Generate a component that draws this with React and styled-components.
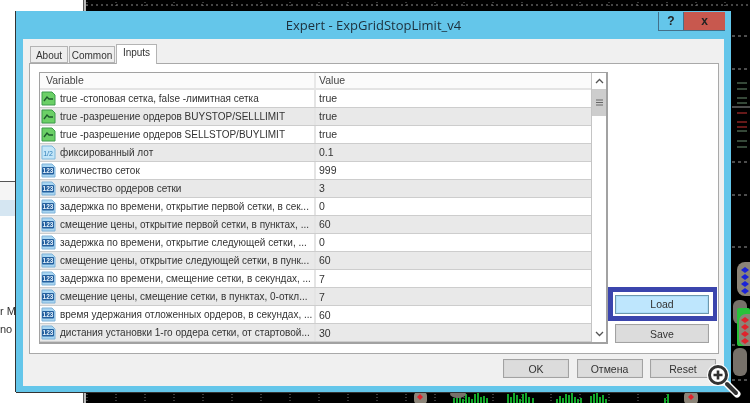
import styled, { createGlobalStyle } from 'styled-components';

const GlobalStyle = createGlobalStyle`
	html, body {
		margin: 0;
		padding: 0;
		background: #000;
	}
	#root {
		width: 750px;
		height: 403px;
		overflow: hidden;
	}
`;

const ROWS = [
	{ type: 'bool', name: 'true -стоповая сетка, false -лимитная сетка', value: 'true' },
	{ type: 'bool', name: 'true -разрешение ордеров BUYSTOP/SELLLIMIT', value: 'true' },
	{ type: 'bool', name: 'true -разрешение ордеров SELLSTOP/BUYLIMIT', value: 'true' },
	{ type: 'frac', name: 'фиксированный лот', value: '0.1' },
	{ type: 'int', name: 'количество сеток', value: '999' },
	{ type: 'int', name: 'количество ордеров сетки', value: '3' },
	{ type: 'int', name: 'задержка по времени, открытие первой сетки, в сек...', value: '0' },
	{ type: 'int', name: 'смещение цены, открытие первой сетки, в пунктах, ...', value: '60' },
	{ type: 'int', name: 'задержка по времени, открытие следующей сетки, ...', value: '0' },
	{ type: 'int', name: 'смещение цены, открытие следующей сетки, в пунк...', value: '60' },
	{ type: 'int', name: 'задержка по времени, смещение сетки, в секундах, ...', value: '7' },
	{ type: 'int', name: 'смещение цены, смещение сетки, в пунктах, 0-откл...', value: '7' },
	{ type: 'int', name: 'время удержания отложенных ордеров, в секундах, ...', value: '60' },
	{ type: 'int', name: 'дистания установки 1-го ордера сетки, от стартовой...', value: '30' },
];

const BARS = [
	[453, 5], [456, 8], [459, 7], [462, 4], [465, 9], [468, 6], [471, 4], [474, 9], [477, 10],
	[480, 6], [483, 7], [486, 5], [507, 9], [510, 6], [513, 10], [516, 8], [519, 4], [522, 9], [525, 10],
	[528, 6], [532, 5], [556, 4], [559, 7], [562, 5], [565, 9], [568, 8], [571, 10], [574, 6], [577, 4],
	[580, 5], [590, 7], [593, 9], [596, 10], [599, 6], [602, 8], [605, 4], [664, 5], [667, 9],
];

const Desktop = styled.div`
	position: relative;
	width: 750px;
	height: 403px;
	overflow: hidden;
	background: #000;
	font-family: 'Liberation Sans', Arial, sans-serif;
	filter: blur(0.3px);
`;

const Chart = styled.svg`
	position: absolute;
	inset: 0;
`;

const Terminal = styled.div`
	position: absolute;
	left: 0;
	top: 0;
	width: 83px;
	height: 403px;
	background: #fff;
	border-right: 1px solid #555;
	box-shadow: 2px 0 0 #bbb;
	font-size: 11px;
	color: #333;
`;

const TerminalTop = styled.div`
	height: 181px;
	border-bottom: 1px solid #555;
`;

const TerminalRow = styled.div`
	height: ${({ $height }) => $height}px;
	line-height: 16px;
	background: ${({ $fill }) => $fill};
`;

const Dialog = styled.div`
	position: absolute;
	left: 16px;
	top: 11px;
	width: 715px;
	height: 381px;
	box-sizing: border-box;
	padding: 0 7px 6px;
	display: flex;
	flex-direction: column;
	background: #64c6ea;
	box-shadow: -1px 0 0 #333, 0 1px 0 #333;
`;

const TitleBar = styled.div`
	position: relative;
	flex: 0 0 28px;
	display: flex;
	align-items: center;
	justify-content: center;
	font-family: 'Open Sans', sans-serif;
	font-size: 13px;
	color: #1d2f3b;
`;

const WindowButtons = styled.div`
	position: absolute;
	right: -1px;
	top: 1px;
	display: flex;
	height: 18px;
	border-bottom: 1px solid #43708a;
`;

const WindowButton = styled.div`
	width: ${({ $wide }) => ($wide ? 42 : 25)}px;
	display: flex;
	align-items: center;
	justify-content: center;
	box-sizing: border-box;
	border-left: 1px solid #43708a;
	background: ${({ $close }) => ($close ? '#c8584e' : 'transparent')};
	color: #222;
	font: bold 12px 'Liberation Sans', sans-serif;
`;

const Body = styled.div`
	flex: 1;
	display: flex;
	flex-direction: column;
	padding: 6px 5px 0 6px;
	background: #f0f0f0;
`;

const Tabs = styled.div`
	display: flex;
	align-items: flex-end;
	height: 18px;
	padding-left: 1px;
	font-size: 10px;
	color: #333;
`;

const Tab = styled.div`
	position: relative;
	box-sizing: border-box;
	width: ${({ $width }) => $width}px;
	height: ${({ $active }) => ($active ? 20 : 17)}px;
	margin-bottom: ${({ $active }) => ($active ? -1 : 0)}px;
	padding-top: ${({ $active }) => ($active ? 2 : 3)}px;
	text-align: center;
	border: 1px solid #b4b4b4;
	border-bottom: ${({ $active }) => ($active ? 'none' : '1px solid #b4b4b4')};
	margin-right: 1px;
	background: ${({ $active }) => ($active ? '#fff' : '#eeeeee')};
	z-index: ${({ $active }) => ($active ? 1 : 0)};
`;

const Panel = styled.div`
	box-sizing: border-box;
	height: 291px;
	display: flex;
	padding: 8px 0 9px 9px;
	background: #fff;
	border: 1px solid #a9a9a9;
`;

const ListBox = styled.div`
	box-sizing: border-box;
	flex: 0 0 569px;
	display: flex;
	border: 1px solid #a2a2a2;
	border-right-width: 2px;
	border-bottom-width: 2px;
`;

const Table = styled.div`
	flex: 1;
	display: flex;
	flex-direction: column;
	min-width: 0;
	font-size: 10px;
	color: #333;
`;

const HeaderRow = styled.div`
	display: grid;
	grid-template-columns: 276px 1fr;
	height: 15px;
	line-height: 14px;
	font-size: 10.5px;
	background: #fbfbfb;
	border-bottom: 2px solid #e4e4e4;
	color: #444;
`;

const HeaderCell = styled.div`
	padding-left: ${({ $pad }) => $pad}px;
	border-right: ${({ $divider }) => ($divider ? '2px solid #e8e8e8' : 'none')};
`;

const Row = styled.div`
	display: grid;
	grid-template-columns: 276px 1fr;
	height: 18.2px;
	box-sizing: border-box;
	border-bottom: 1px solid #cdcdcd;
	background: ${({ $odd }) => ($odd ? '#e9e9e9' : '#fff')};
`;

const NameCell = styled.div`
	display: flex;
	align-items: center;
	gap: 4px;
	padding-left: 1px;
	white-space: nowrap;
	overflow: hidden;
	border-right: 2px solid #e4e4e4;

	& svg {
		flex: 0 0 15px;
	}
`;

const ValueCell = styled.div`
	display: flex;
	align-items: center;
	padding-left: 3px;
	font-size: 10.5px;
`;

const Scrollbar = styled.div`
	flex: 0 0 14px;
	display: flex;
	flex-direction: column;
	background: #fff;
	border-left: 1px solid #c4c4c4;
`;

const ScrollArrow = styled.div`
	height: 16px;
	display: flex;
	align-items: center;
	justify-content: center;
`;

const ScrollThumb = styled.div`
	height: 27px;
	display: flex;
	align-items: center;
	justify-content: center;
	background: #cdcdcd;
`;

const ScrollTrack = styled.div`
	flex: 1;
`;

const SideColumn = styled.div`
	flex: 1;
	display: flex;
	flex-direction: column;
	justify-content: flex-end;
	align-items: flex-start;
	gap: 3px;
	padding-bottom: 1px;
`;

const FocusFrame = styled.div`
	box-sizing: border-box;
	width: 109px;
	height: 34px;
	display: flex;
	align-items: center;
	justify-content: flex-start;
	border: 5px solid #3b45ad;
	border-right-width: 4px;
	padding-left: 2px;
	background: #fff;
`;

const Button = styled.div`
	box-sizing: border-box;
	flex: none;
	width: ${({ $width }) => $width}px;
	height: 19px;
	margin-left: ${({ $inset }) => $inset || 0}px;
	display: flex;
	align-items: center;
	justify-content: center;
	font-size: 10.5px;
	color: #333;
	border: 1px solid ${({ $active }) => ($active ? '#6d97ad' : '#a2a2a2')};
	box-shadow: inset 0 0 0 1px ${({ $active }) => ($active ? '#abdcf7' : '#d8d8d8')};
	background: ${({ $active }) => ($active ? '#bee6fd' : '#dcdcdc')};
`;

const Footer = styled.div`
	flex: 1;
	display: flex;
	justify-content: flex-end;
	align-items: flex-start;
	gap: 7.5px;
	padding: 5px 3px 0 0;
`;

const ZoomBadge = styled.svg`
	position: absolute;
	left: 704px;
	top: 361px;
`;

const BoolIcon = () => (
	<svg width="15" height="15" viewBox="0 0 15 15">
		<path d="M1 1h10l3 3v10H1z" fill="#6bd066" stroke="#3c9a4a" />
		<path d="M3 10l3-4 2 2h4" fill="none" stroke="#1d5a2c" strokeWidth="1.4" />
	</svg>
);

const NumIcon = ({ label = '123' }) => (
	<svg width="15" height="15" viewBox="0 0 15 15">
		<path d="M1 1h10l3 3v10H1z" fill="#a9d6f2" stroke="#7fb2d8" />
		<rect x="1" y="4" width="12" height="7.5" rx="1" fill="#235f9e" />
		<text x="7" y="10" textAnchor="middle" fontSize="6.5" fontWeight="bold" fontFamily="Liberation Sans" fill="#e6f2fb">
			{label}
		</text>
	</svg>
);

const FracIcon = () => (
	<svg width="15" height="15" viewBox="0 0 15 15">
		<path d="M1 1h10l3 3v10H1z" fill="#c4e6f8" stroke="#7fb9dc" />
		<text x="7" y="10.5" textAnchor="middle" fontSize="7" fontFamily="Liberation Sans" fill="#2f7fb8">
			1/2
		</text>
	</svg>
);

const ROW_ICONS = { bool: BoolIcon, frac: FracIcon, int: NumIcon };

const ChartLayer = () => (
	<Chart width="750" height="403">
		<line x1="86" y1="5" x2="750" y2="5" stroke="#8a8a8a" strokeDasharray="2 3" />
		{Array.from({ length: 24 }, (_, i) => (
			<line key={i} x1={87 + i * 29} y1="2" x2={87 + i * 29} y2="8" stroke="#777" strokeDasharray="1 2" />
		))}
		{[36, 69, 162, 195, 247, 345, 380].map((y) => (
			<line key={y} x1="732" y1={y} x2="750" y2={y} stroke="#999" strokeDasharray="3 3" />
		))}
		<line x1="732" y1="107" x2="750" y2="107" stroke="#999" />
		{[83, 89, 98, 103, 113, 122, 127, 131, 141, 147].map((y, i) => (
			<line key={y} x1="737" y1={y} x2="747" y2={y} stroke={i > 3 && i < 7 ? '#c33' : '#6a8f70'} />
		))}
		{Array.from({ length: 22 }, (_, i) => (
			<line key={i} x1={87 + i * 29} y1="394" x2={87 + i * 29} y2="403" stroke="#777" strokeDasharray="1 2" />
		))}
		{BARS.map(([x, h]) => (
			<rect key={x} x={x} y={403 - h} width="2" height={h} fill="#12a82a" />
		))}
		<rect x="733" y="300" width="14" height="24" rx="6" fill="#77716a" />
		<rect x="733" y="348" width="14" height="28" rx="6" fill="#77716a" />
		<rect x="737" y="262" width="30" height="34" rx="8" fill="#8b8478" />
		<rect x="737" y="308" width="13" height="38" rx="2" fill="#27c23a" />
		<rect x="739" y="314" width="30" height="32" rx="7" fill="#8b8478" />
		{[270, 277, 284, 291].map((y) => (
			<path key={y} d={`M745 ${y - 3}l4 3-4 3-4-3z`} fill="#1b22d8" />
		))}
		{[320, 327, 334, 341].map((y) => (
			<path key={y} d={`M745 ${y - 3}l4 3-4 3-4-3z`} fill="#e0222c" />
		))}
		<rect x="414" y="392" width="13" height="12" rx="4" fill="#8b8478" />
		<path d="M420 394l3 3-3 3-3-3z" fill="#e0222c" />
		<rect x="684" y="392" width="14" height="12" rx="4" fill="#8b8478" />
		<path d="M691 394l3 3-3 3-3-3z" fill="#e0222c" />
		<ellipse cx="458" cy="394" rx="8" ry="4" fill="#77716a" />
	</Chart>
);

export default function App() {
	return (
		<>
			<GlobalStyle />
			<Desktop>
				<ChartLayer />
				<Terminal>
					<TerminalTop />
					<TerminalRow $height={18} $fill="#f5f5f5" />
					<TerminalRow $height={16} $fill="#d5e6f2" />
					<TerminalRow $height={87} $fill="#fff" />
					<TerminalRow $height={18} $fill="#fff">
						r M
					</TerminalRow>
					<TerminalRow $height={18} $fill="#fff">
						no
					</TerminalRow>
				</Terminal>
				<Dialog>
					<TitleBar>
						Expert - ExpGridStopLimit_v4
						<WindowButtons>
							<WindowButton>?</WindowButton>
							<WindowButton $wide $close>
								x
							</WindowButton>
						</WindowButtons>
					</TitleBar>
					<Body>
						<Tabs>
							<Tab $width={38}>About</Tab>
							<Tab $width={46}>Common</Tab>
							<Tab $width={41} $active>
								Inputs
							</Tab>
						</Tabs>
						<Panel>
							<ListBox>
								<Table>
									<HeaderRow>
										<HeaderCell $pad={6} $divider>
											Variable
										</HeaderCell>
										<HeaderCell $pad={3}>Value</HeaderCell>
									</HeaderRow>
									{ROWS.map((row, index) => {
										const Icon = ROW_ICONS[row.type];
										return (
											<Row key={index} $odd={index % 2 === 1}>
												<NameCell>
													<Icon />
													{row.name}
												</NameCell>
												<ValueCell>{row.value}</ValueCell>
											</Row>
										);
									})}
								</Table>
								<Scrollbar>
									<ScrollArrow>
										<svg width="9" height="6" viewBox="0 0 9 6">
											<path d="M1 5l3.5-3.5L8 5" fill="none" stroke="#555" strokeWidth="1.3" />
										</svg>
									</ScrollArrow>
									<ScrollThumb>
										<svg width="7" height="7" viewBox="0 0 7 7">
											<path d="M0 1h7M0 3.5h7M0 6h7" stroke="#666" />
										</svg>
									</ScrollThumb>
									<ScrollTrack />
									<ScrollArrow>
										<svg width="9" height="6" viewBox="0 0 9 6">
											<path d="M1 1l3.5 3.5L8 1" fill="none" stroke="#555" strokeWidth="1.3" />
										</svg>
									</ScrollArrow>
								</Scrollbar>
							</ListBox>
							<SideColumn>
								<FocusFrame>
									<Button $width={94} $active>
										Load
									</Button>
								</FocusFrame>
								<Button $width={94} $inset={7}>
									Save
								</Button>
							</SideColumn>
						</Panel>
						<Footer>
							<Button $width={66}>OK</Button>
							<Button $width={66}>Отмена</Button>
							<Button $width={66}>Reset</Button>
						</Footer>
					</Body>
				</Dialog>
				<ZoomBadge width="40" height="40" viewBox="0 0 40 40">
					<path d="M23 23l10 10" stroke="#fff" strokeWidth="7" strokeLinecap="round" />
					<circle cx="14" cy="14" r="11" fill="#fff" />
					<path d="M23 23l9 9" stroke="#333" strokeWidth="4" strokeLinecap="round" />
					<circle cx="14" cy="14" r="8.5" fill="#fff" stroke="#333" strokeWidth="3" />
					<path d="M9.5 14h9M14 9.5v9" stroke="#333" strokeWidth="2.6" />
				</ZoomBadge>
			</Desktop>
		</>
	);
}
